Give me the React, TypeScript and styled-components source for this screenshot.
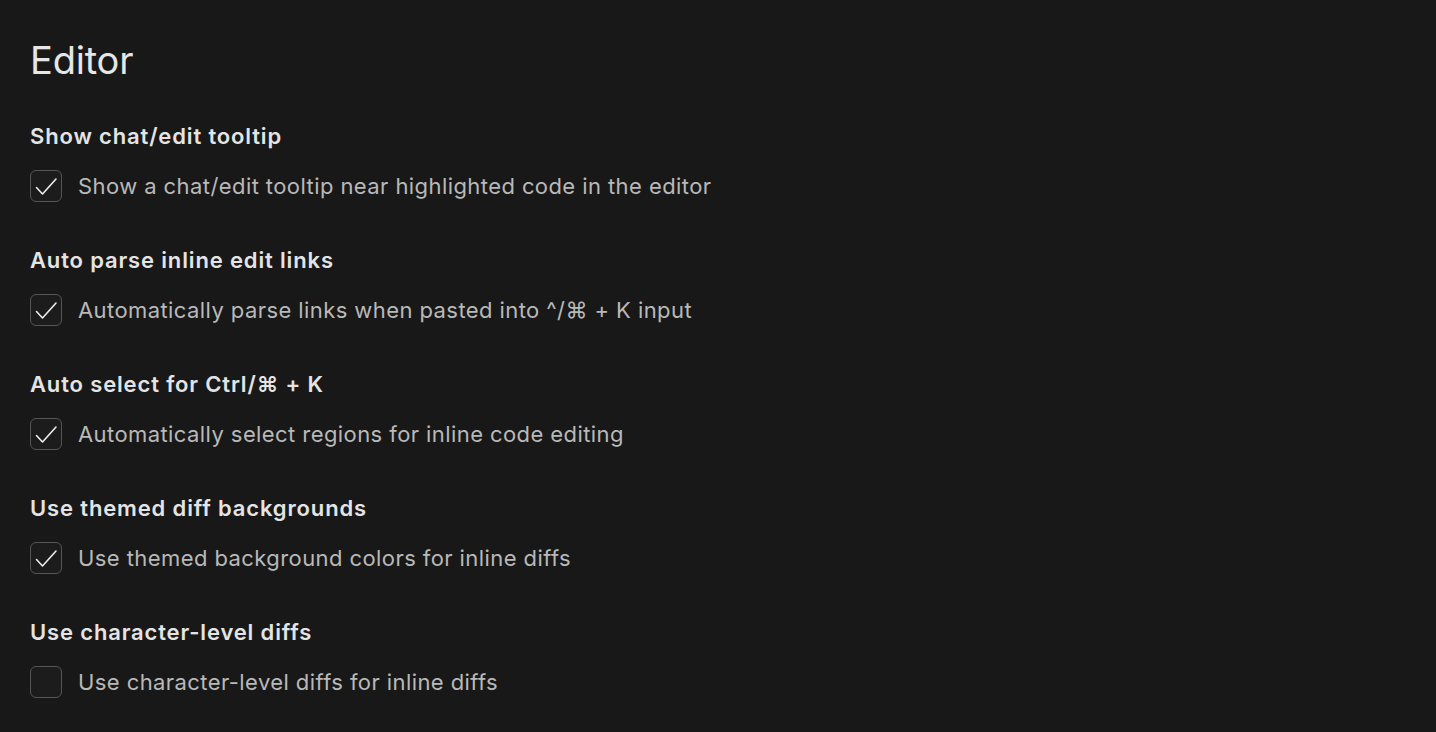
import React, { useState } from 'react'
import styled, { createGlobalStyle } from 'styled-components'

const GlobalStyle = createGlobalStyle`
  html, body {
    margin: 0;
    background: #181818;
  }
  body {
    font-family: Inter, "Noto Sans", sans-serif;
    -webkit-font-smoothing: antialiased;
  }
`

const Page = styled.div`
  height: 732px;
  overflow: hidden;
  box-sizing: border-box;
  padding: 35px 30px 0;
  background: #181818;
`

const Title = styled.h1`
  margin: 0 0 36px;
  font-size: 38px;
  line-height: 50px;
  font-weight: 400;
  color: #e6e6e6;
  letter-spacing: -0.2px;
`

const Section = styled.section`
  display: flex;
  flex-direction: column;
  gap: 19px;
  margin-bottom: 43px;
  &:last-child {
    margin-bottom: 0;
  }
`

const Heading = styled.h2`
  margin: 0;
  font-size: 22px;
  line-height: 30px;
  font-weight: 600;
  color: #e4e4e4;
  letter-spacing: 0.85px;
`

const Row = styled.label`
  display: flex;
  align-items: center;
  gap: 16px;
  cursor: pointer;
`

const Box = styled.span<{ checked: boolean }>`
  width: 32px;
  height: 32px;
  box-sizing: border-box;
  flex-shrink: 0;
  border: 1.5px solid #555;
  border-radius: 6px;
  background: #1c1c1c;
  display: flex;
  align-items: center;
  justify-content: center;
  svg {
    display: ${(p) => (p.checked ? 'block' : 'none')};
  }
`

const Description = styled.span`
  font-size: 22px;
  line-height: 30px;
  color: #b9b9b9;
  letter-spacing: 0.42px;
`

type Setting = { title: string; desc: string; checked: boolean }
const settings: Setting[] = [
  { title: 'Show chat/edit tooltip', desc: 'Show a chat/edit tooltip near highlighted code in the editor', checked: true },
  { title: 'Auto parse inline edit links', desc: 'Automatically parse links when pasted into ^/⌘ + K input', checked: true },
  { title: 'Auto select for Ctrl/⌘ + K', desc: 'Automatically select regions for inline code editing', checked: true },
  { title: 'Use themed diff backgrounds', desc: 'Use themed background colors for inline diffs', checked: true },
  { title: 'Use character-level diffs', desc: 'Use character-level diffs for inline diffs', checked: false },
]

function SettingItem({ item }: { item: Setting }) {
  const [checked, setChecked] = useState(item.checked)
  return (
    <Section>
      <Heading>{item.title}</Heading>
      <Row onClick={() => setChecked(!checked)}>
        <Box checked={checked}>
          <svg width="29" height="29" viewBox="0 0 29 29" fill="none">
            <path d="M4.5 15.5 L10.5 22 L24 7" stroke="#ececec" strokeWidth="1.6" strokeLinecap="round" strokeLinejoin="round" />
          </svg>
        </Box>
        <Description>{item.desc}</Description>
      </Row>
    </Section>
  )
}

export default function App() {
  return (
    <Page>
      <GlobalStyle />
      <Title>Editor</Title>
      {settings.map((s) => (
        <SettingItem key={s.title} item={s} />
      ))}
    </Page>
  )
}
